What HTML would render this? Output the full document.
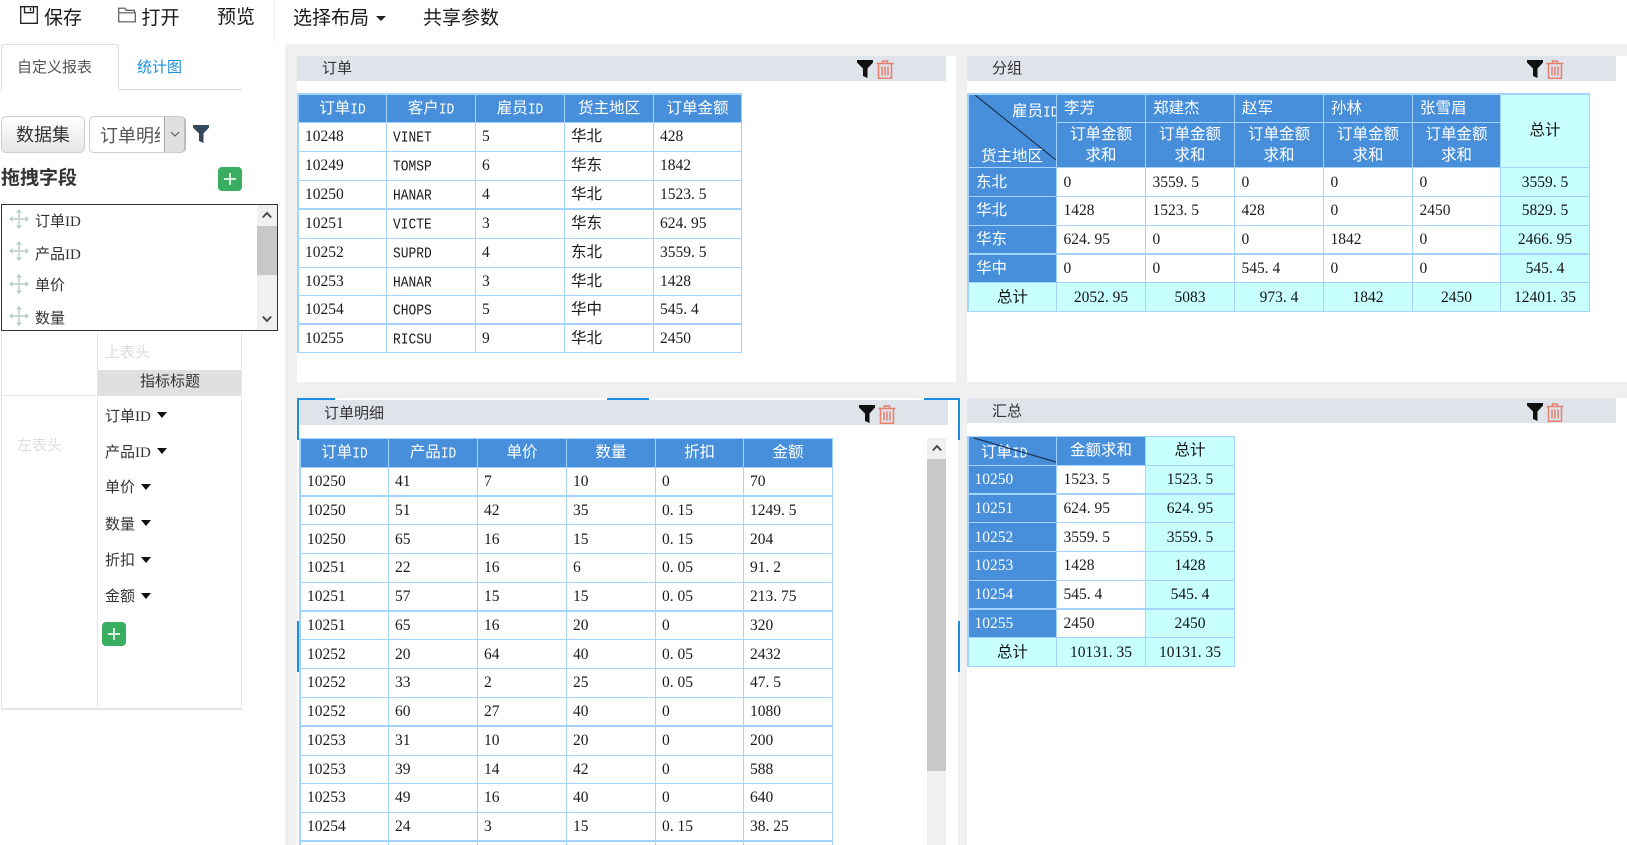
<!DOCTYPE html>
<html lang="zh"><head><meta charset="utf-8"><title>自定义报表</title>
<style>
html,body{margin:0;padding:0;width:1627px;height:845px;overflow:hidden;background:#fff}
body{position:relative;font-family:"Liberation Sans","Noto Sans CJK SC",sans-serif;color:#333}
.a{position:absolute;white-space:nowrap}
.tb{font-size:19px;line-height:26px;top:5px;color:#1a1a1a}
.pn{position:absolute;background:#fff}
.ph{position:absolute;background:#dfe3ea;height:25px}
.pt{position:absolute;font-size:15px;line-height:20px;color:#333;white-space:nowrap}
.fd{font-size:15px;line-height:20px;color:#333;white-space:nowrap;position:absolute;font-family:"Liberation Serif","Noto Sans CJK SC",serif}
.fd2{font-size:15px;line-height:20px;color:#333;white-space:nowrap;position:absolute;left:105px;font-family:"Liberation Serif","Noto Sans CJK SC",serif}
.car{position:absolute;width:0;height:0;border-left:5px solid transparent;border-right:5px solid transparent;border-top:6.500px solid #111}
.plus{position:absolute;width:24px;height:24px;background:#39ae60;border-radius:4px;border:0}
.plus:before{content:"";position:absolute;left:6px;top:11px;width:12px;height:2px;background:#d7f2e0}
.plus:after{content:"";position:absolute;left:11px;top:6px;width:2px;height:12px;background:#d7f2e0}
.sel{position:absolute;background:#1a8fe0}
table.t{position:absolute;table-layout:fixed;border-collapse:separate;border-spacing:0;border-left:2px solid #a5d3ff;border-top:2px solid #a5d3ff}
table.t td{box-sizing:border-box;border-right:1px solid #a5d3ff;border-bottom:1px solid #a5d3ff;padding:0 0 0 6px;font:15.5px/1 "Liberation Serif","WenQuanYi Zen Hei",serif;color:#1a1a1a;white-space:nowrap;overflow:hidden;vertical-align:middle;background:#fff}
table.t.q td{padding-left:6.500px}
table.t td.h{background:#478fdb;color:#fff;text-align:center;padding:0}
table.t td.l{background:#478fdb;color:#fff;padding-left:7px}
table.t td.s{background:#c8ffff;text-align:center;padding:0;color:#111}
table.t td.w{line-height:21px;padding-bottom:1px}
table.t tr.k td{border-bottom-width:2px}
table.t tr.d td{padding-top:2px}
.m{font-family:"Liberation Mono",monospace;font-size:12.9px;display:inline-block;transform:scaleY(1.15)}
i{font-style:normal;letter-spacing:3.9px}
</style></head><body>

<!-- toolbar -->
<svg class="a" style="left:20px;top:6px" width="18" height="18" viewBox="0 0 18 18"><path d="M.7.7h16.600v16.600H.7zM4.500.7v6h9v-6M10.500 2v3" fill="none" stroke="#222" stroke-width="1.300"/></svg>
<span class="a tb" style="left:44px;top:6px">保存</span>
<svg class="a" style="left:118px;top:7px" width="19" height="16" viewBox="0 0 19 16"><path d="M.7 14.800V1.200h6l1.600 2.200h8.200v2.400M.7 14.800h16.600V5.800H.7z" fill="none" stroke="#555" stroke-width="1.200"/></svg>
<span class="a tb" style="left:141.500px;top:6px">打开</span>
<span class="a tb" style="left:217px;top:5px">预览</span>
<div class="a" style="left:274px;top:0;width:1px;height:43px;background:#eee"></div>
<span class="a tb" style="left:293px;top:6px">选择布局</span>
<div class="car" style="left:376px;top:16px;border-top-width:5px;border-top-color:#222"></div>
<span class="a tb" style="left:423px;top:6px">共享参数</span>

<!-- gray workspace -->
<div class="a" style="left:285px;top:44px;width:1342px;height:801px;background:#f0f0f0"></div>

<!-- left tabs -->
<div class="a" style="left:1px;top:44px;width:116px;height:46px;border:1px solid #ddd;border-bottom:0;border-radius:4px 4px 0 0;background:#fff"></div>
<div class="a" style="left:118px;top:89px;width:124px;height:1px;background:#ddd"></div>
<span class="a" style="left:17px;top:58px;font-size:15px;line-height:20px;color:#555">自定义报表</span>
<span class="a" style="left:137px;top:58px;font-size:15px;line-height:20px;color:#1a8ed8">统计图</span>

<!-- dataset -->
<div class="a" style="left:1px;top:116px;width:82px;height:35px;border:1px solid #ccc;border-radius:5px;background:linear-gradient(#fff,#e6e6e6);font-size:18px;line-height:36px;text-align:center;color:#333">数据集</div>
<div class="a" style="left:89px;top:116px;width:94px;height:35px;border:1px solid #ccc;border-right:2px solid #bbb;border-radius:5px;background:#fff;overflow:hidden">
  <span class="a" style="left:10px;top:0;width:60px;overflow:hidden;font-size:18px;line-height:38px;color:#555">订单明细</span>
  <div class="a" style="left:74px;top:0;width:20px;height:35px;background:#e0e0e0;border-left:1px solid #aaa"></div>
  <svg class="a" style="left:80px;top:14px" width="10" height="7" viewBox="0 0 10 7"><path d="M1 1l4 4 4-4" fill="none" stroke="#555"/></svg>
</div>
<svg class="a" style="left:193px;top:125px" width="16" height="18" viewBox="0 0 16 18"><path d="M0 0h16v2.500L10.500 8.500V18L6 16V8.500L0 2.500z" fill="#34495e"/></svg>

<span class="a" style="left:1px;top:166px;font-size:19px;line-height:26px;font-weight:bold;color:#333">拖拽字段</span>
<div class="plus" style="left:218px;top:167px"></div>

<!-- lower field grid -->
<div class="a" style="left:97px;top:331px;width:1px;height:377px;background:#e6e6e6"></div>
<div class="a" style="left:1px;top:331px;width:1px;height:377px;background:#e6e6e6"></div>
<div class="a" style="left:241px;top:331px;width:1px;height:377px;background:#e6e6e6"></div>
<div class="a" style="left:1px;top:395px;width:97px;height:1px;background:#e6e6e6"></div>
<div class="a" style="left:1px;top:708px;width:241px;height:2px;background:#e6e6e6"></div>
<div class="a" style="left:98px;top:370px;width:143px;height:26px;background:#e0e0e0"></div>
<span class="a" style="left:140px;top:372px;font-size:15px;line-height:20px;color:#333">指标标题</span>
<span class="a" style="left:105px;top:343px;font-size:15px;line-height:20px;color:#ddd">上表头</span>
<span class="a" style="left:17px;top:436px;font-size:15px;line-height:20px;color:#ddd">左表头</span>
<span class="fd2" style="top:407px">订单ID</span><div class="car" style="left:157px;top:412px"></div>
<span class="fd2" style="top:443px">产品ID</span><div class="car" style="left:157px;top:448px"></div>
<span class="fd2" style="top:478px">单价</span><div class="car" style="left:141px;top:484px"></div>
<span class="fd2" style="top:515px">数量</span><div class="car" style="left:141px;top:520px"></div>
<span class="fd2" style="top:551px">折扣</span><div class="car" style="left:141px;top:557px"></div>
<span class="fd2" style="top:587px">金额</span><div class="car" style="left:141px;top:593px"></div>
<div class="plus" style="left:102px;top:622px"></div>

<!-- field list -->
<div class="a" style="left:1px;top:204px;width:275px;height:125px;border:1px solid #333;background:#fff;overflow:hidden">
  <svg class="a" style="left:7px;top:4px" width="20" height="20" viewBox="0 0 20 20"><path d="M10 2v16M2 10h16" stroke="#b8cbcb" stroke-width="1.400"/><path d="M10 0l3 3.500H7zM10 20l3-3.500H7zM0 10l3.500-3v6zM20 10l-3.500-3v6z" fill="#b8cbcb"/></svg>
  <span class="fd" style="left:33px;top:7px">订单ID</span>
  <svg class="a" style="left:7px;top:36px" width="20" height="20" viewBox="0 0 20 20"><path d="M10 2v16M2 10h16" stroke="#b8cbcb" stroke-width="1.400"/><path d="M10 0l3 3.500H7zM10 20l3-3.500H7zM0 10l3.500-3v6zM20 10l-3.500-3v6z" fill="#b8cbcb"/></svg>
  <span class="fd" style="left:33px;top:40px">产品ID</span>
  <svg class="a" style="left:7px;top:69px" width="20" height="20" viewBox="0 0 20 20"><path d="M10 2v16M2 10h16" stroke="#b8cbcb" stroke-width="1.400"/><path d="M10 0l3 3.500H7zM10 20l3-3.500H7zM0 10l3.500-3v6zM20 10l-3.500-3v6z" fill="#b8cbcb"/></svg>
  <span class="fd" style="left:33px;top:71px">单价</span>
  <svg class="a" style="left:7px;top:101px" width="20" height="20" viewBox="0 0 20 20"><path d="M10 2v16M2 10h16" stroke="#b8cbcb" stroke-width="1.400"/><path d="M10 0l3 3.500H7zM10 20l3-3.500H7zM0 10l3.500-3v6zM20 10l-3.500-3v6z" fill="#b8cbcb"/></svg>
  <span class="fd" style="left:33px;top:104px">数量</span>
  <div class="a" style="left:255px;top:0;width:20px;height:125px;background:#f0f0f0"></div>
  <div class="a" style="left:255px;top:21px;width:20px;height:49px;background:#c8c8c8"></div>
  <svg class="a" style="left:260px;top:6px" width="10" height="8" viewBox="0 0 10 8"><path d="M.8 6.500L5 2l4.200 4.500" fill="none" stroke="#444" stroke-width="1.800"/></svg>
  <svg class="a" style="left:260px;top:110px" width="10" height="8" viewBox="0 0 10 8"><path d="M.8 1.500L5 6l4.200-4.500" fill="none" stroke="#444" stroke-width="1.800"/></svg>
</div>

<!-- panel 1 -->
<div class="pn" style="left:297px;top:56px;width:659px;height:326px"></div>
<div class="ph" style="left:297px;top:56px;width:649px"></div>
<span class="pt" style="left:322px;top:59px">订单</span>
<svg class="a" style="left:857px;top:60px" width="16" height="18" viewBox="0 0 16 18"><path d="M0 0h16v2.500L10.500 8.500V18L6 16V8.500L0 2.500z" fill="#111"/></svg>
<svg class="a" style="left:876px;top:60px" width="18" height="19" viewBox="0 0 18 19"><path d="M.5 3.500h17M6.500 3.500V1h5v2.500M2.500 3.500v14.700h13V3.500M6 6.500v9M9 6.500v9M12 6.500v9" fill="none" stroke="#e8806f" stroke-width="1.500"/></svg>
<table class="t" style="left:297px;top:93px;width:445px">
<col style="width:88px"><col style="width:89px"><col style="width:89px"><col style="width:89px"><col style="width:88px">
<tr style="height:28px"><td class="h">订单<span class="m">ID</span></td><td class="h">客户<span class="m">ID</span></td><td class="h">雇员<span class="m">ID</span></td><td class="h">货主地区</td><td class="h">订单金额</td></tr>
<tr style="height:29px"><td>10248</td><td><span class="m">VINET</span></td><td>5</td><td>华北</td><td>428</td></tr>
<tr style="height:29px"><td>10249</td><td><span class="m">TOMSP</span></td><td>6</td><td>华东</td><td>1842</td></tr>
<tr style="height:29px" class="k"><td>10250</td><td><span class="m">HANAR</span></td><td>4</td><td>华北</td><td>1523<i>.</i>5</td></tr>
<tr style="height:29px"><td>10251</td><td><span class="m">VICTE</span></td><td>3</td><td>华东</td><td>624<i>.</i>95</td></tr>
<tr style="height:29px"><td>10252</td><td><span class="m">SUPRD</span></td><td>4</td><td>东北</td><td>3559<i>.</i>5</td></tr>
<tr style="height:28px"><td>10253</td><td><span class="m">HANAR</span></td><td>3</td><td>华北</td><td>1428</td></tr>
<tr style="height:29px" class="k"><td>10254</td><td><span class="m">CHOPS</span></td><td>5</td><td>华中</td><td>545<i>.</i>4</td></tr>
<tr style="height:28px"><td>10255</td><td><span class="m">RICSU</span></td><td>9</td><td>华北</td><td>2450</td></tr>
</table>

<!-- panel 2 -->
<div class="pn" style="left:967px;top:56px;width:660px;height:326px"></div>
<div class="ph" style="left:967px;top:56px;width:649px"></div>
<span class="pt" style="left:992px;top:59px">分组</span>
<svg class="a" style="left:1527px;top:60px" width="16" height="18" viewBox="0 0 16 18"><path d="M0 0h16v2.500L10.500 8.500V18L6 16V8.500L0 2.500z" fill="#111"/></svg>
<svg class="a" style="left:1546px;top:60px" width="18" height="19" viewBox="0 0 18 19"><path d="M.5 3.500h17M6.500 3.500V1h5v2.500M2.500 3.500v14.700h13V3.500M6 6.500v9M9 6.500v9M12 6.500v9" fill="none" stroke="#e8806f" stroke-width="1.500"/></svg>
<table class="t q" style="left:967px;top:93px;width:623px">
<col style="width:88px"><col style="width:89px"><col style="width:89px"><col style="width:89px"><col style="width:89px"><col style="width:88px"><col style="width:89px">
<tr style="height:28px"><td class="h" rowspan="2"></td><td class="h" style="text-align:left;padding-left:7px">李芳</td><td class="h" style="text-align:left;padding-left:7px">郑建杰</td><td class="h" style="text-align:left;padding-left:7px">赵军</td><td class="h" style="text-align:left;padding-left:7px">孙林</td><td class="h" style="text-align:left;padding-left:7px">张雪眉</td><td class="s" rowspan="2">总计</td></tr>
<tr style="height:45px"><td class="h w">订单金额<br>求和</td><td class="h w">订单金额<br>求和</td><td class="h w">订单金额<br>求和</td><td class="h w">订单金额<br>求和</td><td class="h w">订单金额<br>求和</td></tr>
<tr style="height:29px" class="d"><td class="l">东北</td><td>0</td><td>3559<i>.</i>5</td><td>0</td><td>0</td><td>0</td><td class="s">3559<i>.</i>5</td></tr>
<tr style="height:29px"><td class="l">华北</td><td>1428</td><td>1523<i>.</i>5</td><td>428</td><td>0</td><td>2450</td><td class="s">5829<i>.</i>5</td></tr>
<tr style="height:29px" class="k"><td class="l">华东</td><td>624<i>.</i>95</td><td>0</td><td>0</td><td>1842</td><td>0</td><td class="s">2466<i>.</i>95</td></tr>
<tr style="height:28px"><td class="l">华中</td><td>0</td><td>0</td><td>545<i>.</i>4</td><td>0</td><td>0</td><td class="s">545<i>.</i>4</td></tr>
<tr style="height:29px" class="d"><td class="s">总计</td><td class="s">2052<i>.</i>95</td><td class="s">5083</td><td class="s">973<i>.</i>4</td><td class="s">1842</td><td class="s">2450</td><td class="s">12401<i>.</i>35</td></tr>
</table>
<div class="a" style="left:969px;top:95px;width:87px;height:72px;overflow:hidden;font:15.500px/20px 'Liberation Serif','WenQuanYi Zen Hei',serif;color:#fff">
  <svg class="a" style="left:0;top:0" width="87" height="72"><path d="M6 0L87 65" stroke="#1b3556" stroke-width="1.200"/></svg>
  <span class="a" style="left:43px;top:7px">雇员<span class="m">ID</span></span>
  <span class="a" style="left:12px;top:52px">货主地区</span>
</div>

<!-- panel 3 -->
<div class="pn" style="left:297px;top:398px;width:661px;height:447px"></div>
<div class="ph" style="left:299px;top:400px;width:649px"></div>
<span class="pt" style="left:324px;top:404px">订单明细</span>
<svg class="a" style="left:859px;top:405px" width="16" height="18" viewBox="0 0 16 18"><path d="M0 0h16v2.500L10.500 8.500V18L6 16V8.500L0 2.500z" fill="#111"/></svg>
<svg class="a" style="left:878px;top:405px" width="18" height="19" viewBox="0 0 18 19"><path d="M.5 3.500h17M6.500 3.500V1h5v2.500M2.500 3.500v14.700h13V3.500M6 6.500v9M9 6.500v9M12 6.500v9" fill="none" stroke="#e8806f" stroke-width="1.500"/></svg>
<div class="sel" style="left:297px;top:398px;width:38px;height:2px"></div>
<div class="sel" style="left:607px;top:398px;width:42px;height:2px"></div>
<div class="sel" style="left:924px;top:398px;width:36px;height:2px"></div>
<div class="sel" style="left:297px;top:398px;width:2px;height:42px"></div>
<div class="sel" style="left:958px;top:398px;width:2px;height:42px"></div>
<div class="sel" style="left:297px;top:621px;width:2px;height:51px"></div>
<div class="sel" style="left:958px;top:621px;width:2px;height:51px"></div>
<table class="t" style="left:299px;top:438px;width:534px;border-top-width:1px">
<col style="width:88px"><col style="width:89px"><col style="width:89px"><col style="width:89px"><col style="width:88px"><col style="width:89px">
<tr style="height:29px"><td class="h">订单<span class="m">ID</span></td><td class="h">产品<span class="m">ID</span></td><td class="h">单价</td><td class="h">数量</td><td class="h">折扣</td><td class="h">金额</td></tr>
<tr style="height:29px" class="k"><td>10250</td><td>41</td><td>7</td><td>10</td><td>0</td><td>70</td></tr>
<tr style="height:28px"><td>10250</td><td>51</td><td>42</td><td>35</td><td>0<i>.</i>15</td><td>1249<i>.</i>5</td></tr>
<tr style="height:29px" class="d"><td>10250</td><td>65</td><td>16</td><td>15</td><td>0<i>.</i>15</td><td>204</td></tr>
<tr style="height:29px"><td>10251</td><td>22</td><td>16</td><td>6</td><td>0<i>.</i>05</td><td>91<i>.</i>2</td></tr>
<tr style="height:29px" class="k"><td>10251</td><td>57</td><td>15</td><td>15</td><td>0<i>.</i>05</td><td>213<i>.</i>75</td></tr>
<tr style="height:28px"><td>10251</td><td>65</td><td>16</td><td>20</td><td>0</td><td>320</td></tr>
<tr style="height:29px" class="d"><td>10252</td><td>20</td><td>64</td><td>40</td><td>0<i>.</i>05</td><td>2432</td></tr>
<tr style="height:29px"><td>10252</td><td>33</td><td>2</td><td>25</td><td>0<i>.</i>05</td><td>47<i>.</i>5</td></tr>
<tr style="height:29px" class="k"><td>10252</td><td>60</td><td>27</td><td>40</td><td>0</td><td>1080</td></tr>
<tr style="height:29px"><td>10253</td><td>31</td><td>10</td><td>20</td><td>0</td><td>200</td></tr>
<tr style="height:28px"><td>10253</td><td>39</td><td>14</td><td>42</td><td>0</td><td>588</td></tr>
<tr style="height:29px"><td>10253</td><td>49</td><td>16</td><td>40</td><td>0</td><td>640</td></tr>
<tr style="height:29px" class="k"><td>10254</td><td>24</td><td>3</td><td>15</td><td>0<i>.</i>15</td><td>38<i>.</i>25</td></tr>
<tr style="height:29px"><td></td><td></td><td></td><td></td><td></td><td></td></tr>
</table>
<div class="a" style="left:927px;top:438px;width:19px;height:407px;background:#f0f0f0"></div>
<div class="a" style="left:927px;top:459px;width:19px;height:312px;background:#c8c8c8"></div>
<svg class="a" style="left:932px;top:444px" width="10" height="8" viewBox="0 0 10 8"><path d="M.8 6.500L5 2l4.200 4.500" fill="none" stroke="#444" stroke-width="1.800"/></svg>

<!-- panel 4 -->
<div class="pn" style="left:967px;top:398px;width:660px;height:447px"></div>
<div class="ph" style="left:967px;top:398px;width:649px"></div>
<span class="pt" style="left:992px;top:402px">汇总</span>
<svg class="a" style="left:1527px;top:403px" width="16" height="18" viewBox="0 0 16 18"><path d="M0 0h16v2.500L10.500 8.500V18L6 16V8.500L0 2.500z" fill="#111"/></svg>
<svg class="a" style="left:1546px;top:403px" width="18" height="19" viewBox="0 0 18 19"><path d="M.5 3.500h17M6.500 3.500V1h5v2.500M2.500 3.500v14.700h13V3.500M6 6.500v9M9 6.500v9M12 6.500v9" fill="none" stroke="#e8806f" stroke-width="1.500"/></svg>
<table class="t q" style="left:967px;top:436px;width:268px;border-top-width:1px">
<col style="width:88px"><col style="width:89px"><col style="width:89px">
<tr style="height:29px"><td class="h"></td><td class="h">金额求和</td><td class="s">总计</td></tr>
<tr style="height:29px" class="k"><td class="l" style="padding-left:5.500px">10250</td><td>1523<i>.</i>5</td><td class="s">1523<i>.</i>5</td></tr>
<tr style="height:28px"><td class="l" style="padding-left:5.500px">10251</td><td>624<i>.</i>95</td><td class="s">624<i>.</i>95</td></tr>
<tr style="height:29px" class="d"><td class="l" style="padding-left:5.500px">10252</td><td>3559<i>.</i>5</td><td class="s">3559<i>.</i>5</td></tr>
<tr style="height:29px"><td class="l" style="padding-left:5.500px">10253</td><td>1428</td><td class="s">1428</td></tr>
<tr style="height:29px" class="k"><td class="l" style="padding-left:5.500px">10254</td><td>545<i>.</i>4</td><td class="s">545<i>.</i>4</td></tr>
<tr style="height:28px"><td class="l" style="padding-left:5.500px">10255</td><td>2450</td><td class="s">2450</td></tr>
<tr style="height:29px" class="d"><td class="s">总计</td><td class="s">10131<i>.</i>35</td><td class="s">10131<i>.</i>35</td></tr>
</table>
<div class="a" style="left:969px;top:437px;width:87px;height:28px;overflow:hidden;font:15.500px/20px 'Liberation Serif','WenQuanYi Zen Hei',serif;color:#fff">
  <span class="a" style="left:12px;top:6px">订单<span class="m">ID</span></span>
  <svg class="a" style="left:0;top:0" width="87" height="28"><path d="M5 1L87 25" stroke="#1b3556" stroke-width="1.200"/></svg>
</div>
</body></html>
